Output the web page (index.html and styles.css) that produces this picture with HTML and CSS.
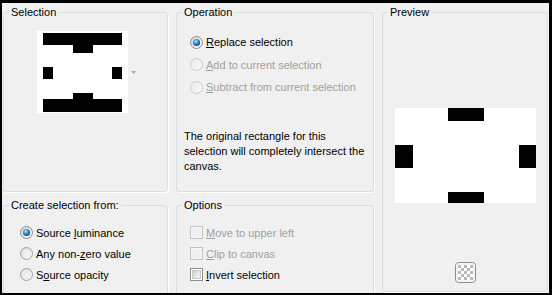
FILE: index.html
```html
<!DOCTYPE html>
<html>
<head>
<meta charset="utf-8">
<title>Selection from mask</title>
<link rel="stylesheet" href="styles.css">
</head>
<body>
<svg class="defs" width="0" height="0" aria-hidden="true">
  <defs>
    <linearGradient id="rfill" x1="0" y1="0" x2="1" y2="1">
      <stop offset="0" stop-color="#d6d6d6"/>
      <stop offset="1" stop-color="#fbfbfb"/>
    </linearGradient>
    <linearGradient id="rfillOff" x1="0" y1="0" x2="1" y2="1">
      <stop offset="0" stop-color="#e9e9e9"/>
      <stop offset="1" stop-color="#fafafa"/>
    </linearGradient>
    <radialGradient id="rdot" cx="40%" cy="35%" r="65%">
      <stop offset="0" stop-color="#c4e8ff"/>
      <stop offset="0.45" stop-color="#3c98de"/>
      <stop offset="1" stop-color="#0d4a8a"/>
    </radialGradient>
    <linearGradient id="cfill" x1="0" y1="0" x2="1" y2="1">
      <stop offset="0" stop-color="#cfcfcf"/>
      <stop offset="1" stop-color="#f7f7f7"/>
    </linearGradient>
    <symbol id="radio-on" viewBox="0 0 13 13">
      <circle cx="6.5" cy="6.5" r="6" fill="url(#rfill)" stroke="#8c8c8c"/>
      <circle cx="6.5" cy="6.5" r="3.6" fill="url(#rdot)"/>
    </symbol>
    <symbol id="radio-off" viewBox="0 0 13 13">
      <circle cx="6.5" cy="6.5" r="6" fill="url(#rfill)" stroke="#a2a2a2"/>
      <circle cx="6.5" cy="6.5" r="4" fill="#f3f3f3" opacity="0.6"/>
    </symbol>
    <symbol id="radio-dis" viewBox="0 0 13 13">
      <circle cx="6.5" cy="6.5" r="6" fill="url(#rfillOff)" stroke="#cdcdcd"/>
    </symbol>
    <symbol id="check-dis" viewBox="0 0 13 13">
      <rect x="0.5" y="0.5" width="12" height="12" fill="#f7f7f7" stroke="#c3c3c3"/>
      <rect x="2" y="2" width="9" height="9" fill="#f0f0f0"/>
    </symbol>
    <symbol id="check-on" viewBox="0 0 13 13">
      <rect x="0.5" y="0.5" width="12" height="12" fill="#ffffff" stroke="#8e8f8f"/>
      <rect x="2.5" y="2.5" width="8" height="8" fill="url(#cfill)" stroke="#c8c8c8"/>
    </symbol>
  </defs>
</svg>

<div class="panel">
  <fieldset class="group g-selection">
    <legend>Selection</legend>
    <div class="thumb-row">
      <svg class="thumb" width="91" height="82" viewBox="0 0 91 82">
        <rect width="91" height="82" fill="#fff"/>
        <rect x="6" y="2" width="79" height="12" fill="#000"/>
        <rect x="36" y="14" width="20" height="8" fill="#000"/>
        <rect x="6" y="36" width="10" height="12" fill="#000"/>
        <rect x="75" y="36" width="10" height="12" fill="#000"/>
        <rect x="36" y="62" width="20" height="6" fill="#000"/>
        <rect x="6" y="68" width="79" height="13" fill="#000"/>
      </svg>
      <svg class="drop" width="5" height="3" viewBox="0 0 5 3">
        <path d="M0 0H5L2.5 3Z" fill="#a8a8a8"/>
      </svg>
    </div>
  </fieldset>

  <fieldset class="group g-operation">
    <legend>Operation</legend>
    <div class="list op-list">
      <label class="opt"><svg class="ico"><use href="#radio-on"/></svg><span><u>R</u>eplace selection</span></label>
      <label class="opt dis"><svg class="ico"><use href="#radio-dis"/></svg><span><u>A</u>dd to current selection</span></label>
      <label class="opt dis"><svg class="ico"><use href="#radio-dis"/></svg><span><u>S</u>ubtract from current selection</span></label>
    </div>
    <p class="note">The original rectangle for this selection will completely intersect the canvas.</p>
  </fieldset>

  <fieldset class="group g-preview">
    <legend>Preview</legend>
    <div class="preview-body">
      <svg class="pv" width="141" height="95" viewBox="0 0 141 95">
        <rect width="141" height="95" fill="#fff"/>
        <rect x="53" y="0" width="36" height="13" fill="#000"/>
        <rect x="0" y="37" width="18" height="23" fill="#000"/>
        <rect x="124" y="37" width="17" height="23" fill="#000"/>
        <rect x="53" y="84" width="36" height="11" fill="#000"/>
      </svg>
      <svg class="checker" width="21" height="21" viewBox="0 0 21 21">
        <rect x="0.5" y="0.5" width="20" height="20" rx="3" fill="#f4f4f4" stroke="#8d8d8d"/>
        <rect x="3" y="3" width="15" height="15" fill="#fff"/>
        <g fill="#b9b9b9">
          <rect x="3" y="3" width="3" height="3"/><rect x="9" y="3" width="3" height="3"/><rect x="15" y="3" width="3" height="3"/>
          <rect x="6" y="6" width="3" height="3"/><rect x="12" y="6" width="3" height="3"/>
          <rect x="3" y="9" width="3" height="3"/><rect x="9" y="9" width="3" height="3"/><rect x="15" y="9" width="3" height="3"/>
          <rect x="6" y="12" width="3" height="3"/><rect x="12" y="12" width="3" height="3"/>
          <rect x="3" y="15" width="3" height="3"/><rect x="9" y="15" width="3" height="3"/><rect x="15" y="15" width="3" height="3"/>
        </g>
      </svg>
    </div>
  </fieldset>

  <fieldset class="group g-create">
    <legend>Create selection from:</legend>
    <div class="list sm-list">
      <label class="opt"><svg class="ico"><use href="#radio-on"/></svg><span>Source <u>l</u>uminance</span></label>
      <label class="opt"><svg class="ico"><use href="#radio-off"/></svg><span>Any non-<u>z</u>ero value</span></label>
      <label class="opt"><svg class="ico"><use href="#radio-off"/></svg><span>S<u>o</u>urce opacity</span></label>
    </div>
  </fieldset>

  <fieldset class="group g-options">
    <legend>Options</legend>
    <div class="list sm-list chk-list">
      <label class="opt dis"><svg class="ico"><use href="#check-dis"/></svg><span><u>M</u>ove to upper left</span></label>
      <label class="opt dis"><svg class="ico"><use href="#check-dis"/></svg><span><u>C</u>lip to canvas</span></label>
      <label class="opt"><svg class="ico"><use href="#check-on"/></svg><span><u>I</u>nvert selection</span></label>
    </div>
  </fieldset>
</div>
</body>
</html>
```

FILE: styles.css
```css
html, body {
  margin: 0;
  padding: 0;
  background: #000;
  width: 552px;
  height: 295px;
  overflow: hidden;
}

.defs {
  position: absolute;
  width: 0;
  height: 0;
}

.panel {
  box-sizing: border-box;
  margin: 3px 0 0 2px;
  width: 547px;
  height: 290px;
  padding: 2px 1px 0 1px;
  background: #f0f0f0;
  overflow: hidden;
  display: grid;
  grid-template-columns: 165px 198px 166px;
  grid-template-rows: 187px 1fr;
  column-gap: 8px;
  row-gap: 6px;
  font-family: "Liberation Sans", Arial, sans-serif;
  font-size: 11px;
  color: #000;
}

.group {
  box-sizing: border-box;
  margin: 0;
  padding: 0;
  min-width: 0;
  border: 1px solid #d5dfe5;
  border-radius: 3px;
  box-shadow: 1px 1px 0 #ffffff;
  align-self: start;
}

.group legend {
  padding: 0 2px;
  margin-left: 5px;
  line-height: 15px;
  font-size: 11px;
}

.g-selection { grid-column: 1; grid-row: 1; height: 187px; }
.g-operation { grid-column: 2; grid-row: 1; height: 187px; }
.g-preview { grid-column: 3; grid-row: 1 / 3; height: 287px; }
.g-create { grid-column: 1; grid-row: 2; height: 110px; }
.g-options { grid-column: 2; grid-row: 2; height: 110px; }

.thumb-row {
  display: flex;
  align-items: center;
  margin: 11px 0 0 33px;
}

.thumb { display: block; }
.drop { display: block; margin-left: 3px; }

.list {
  display: flex;
  flex-direction: column;
}

.opt {
  display: flex;
  align-items: center;
  gap: 3px;
  white-space: nowrap;
  font-size: 11px;
}

.opt.dis { color: #a0a0a0; }

.ico {
  width: 13px;
  height: 13px;
  flex: none;
}

.op-list {
  margin: 11px 0 0 13px;
}
.op-list .opt { height: 22.5px; }

.note {
  margin: 30px 0 0 7px;
  width: 185px;
  font-size: 11px;
  line-height: 15px;
}

.sm-list {
  margin: 9px 0 0 16px;
}
.sm-list .opt { height: 21px; }
.chk-list { margin-left: 13px; }

.preview-body {
  display: flex;
  flex-direction: column;
  align-items: center;
}

.pv { display: block; margin-top: 88px; }
.checker { display: block; margin-top: 59px; }
```
